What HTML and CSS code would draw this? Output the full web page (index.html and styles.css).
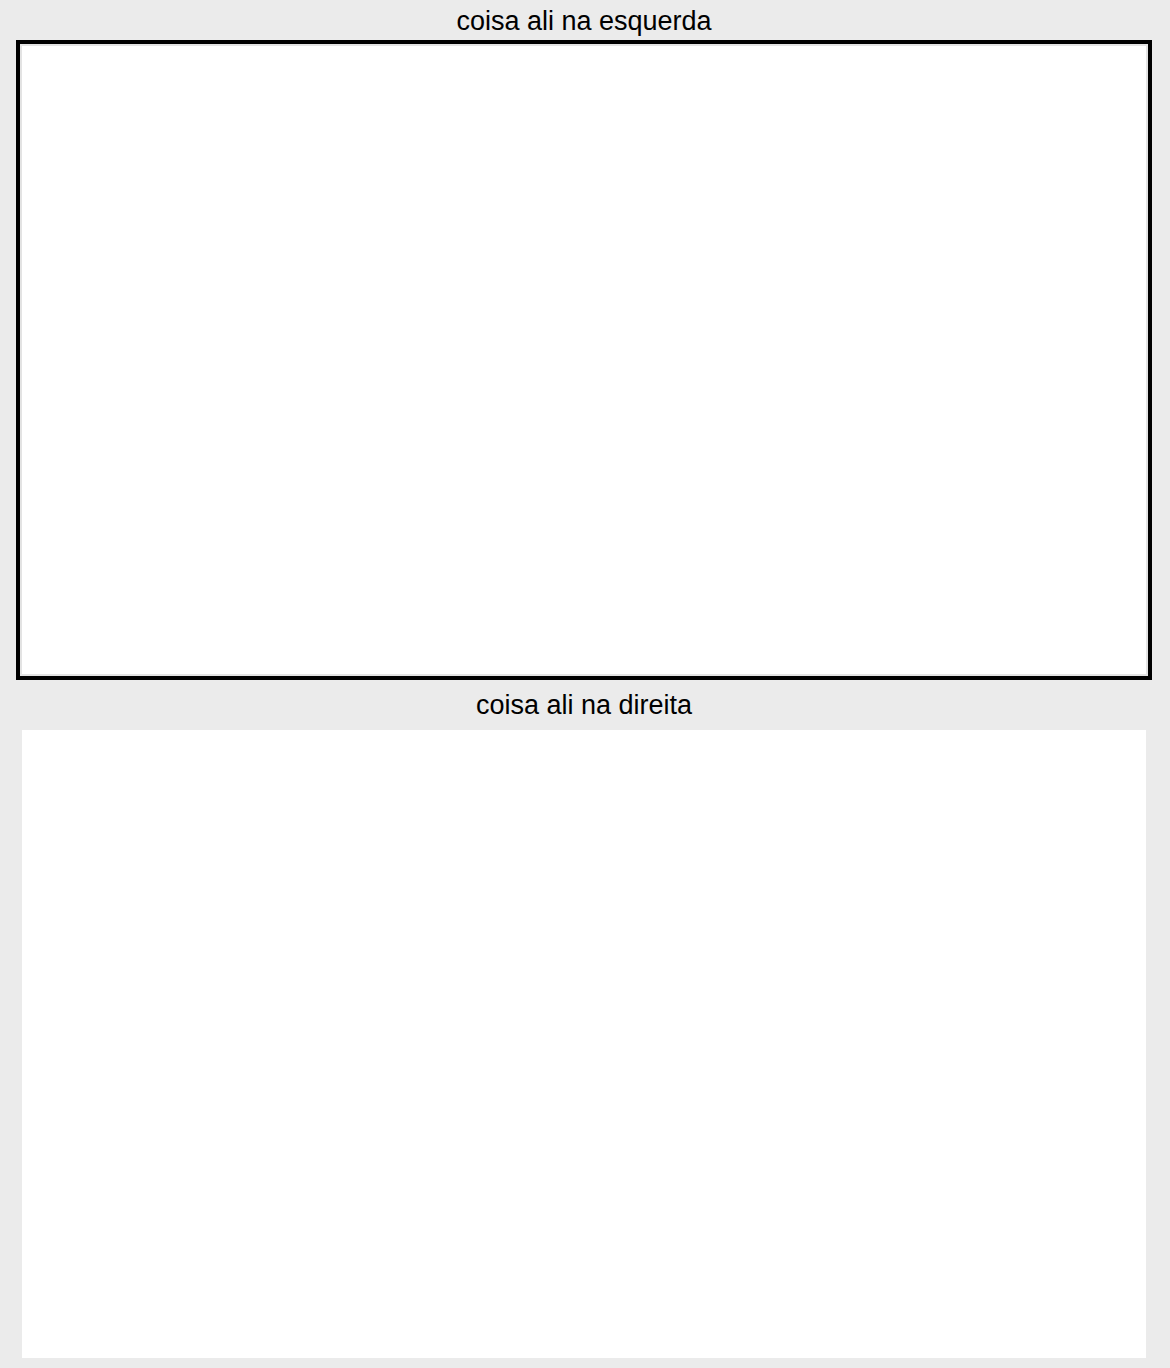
FILE: index.html
```html
<!DOCTYPE html>
<html lang="pt-BR">
<head>
<meta charset="UTF-8">
<meta name="viewport" content="width=device-width, initial-scale=1.0">
<title>Esquerda e direita</title>
<link rel="stylesheet" href="styles.css">
</head>
<body>
<div class="container">
    <div class="label label-top">coisa ali na esquerda</div>
    <textarea id="left" class="editor" autofocus></textarea>
    <div class="label label-mid">coisa ali na direita</div>
    <div id="right" class="output"></div>
</div>
</body>
</html>
```

FILE: styles.css
```css
html, body {
    margin: 0;
    padding: 0;
    background-color: #ebebeb;
}

body {
    font-family: "Liberation Sans", Arial, sans-serif;
    color: #000;
}

.container {
    display: flex;
    flex-direction: column;
    width: 1136px;
    padding: 0 0 10px 16px;
}

.label {
    font-size: 27px;
    line-height: 30px;
    text-align: center;
}

.label-top {
    padding: 6px 0 4px;
}

.label-mid {
    padding: 10px 0;
}

.editor {
    box-sizing: border-box;
    width: 1136px;
    height: 640px;
    margin: 0;
    padding: 4px;
    border: 4px solid #000;
    box-shadow: inset 2px 2px 0 #e3e3e3, inset -2px -2px 0 #e3e3e3;
    background-color: #fff;
    font-family: "Liberation Mono", monospace;
    font-size: 20px;
    resize: none;
    outline: none;
    caret-color: #000;
}

.output {
    width: 1124px;
    height: 628px;
    margin: 0 6px;
    background-color: #fff;
}
```
